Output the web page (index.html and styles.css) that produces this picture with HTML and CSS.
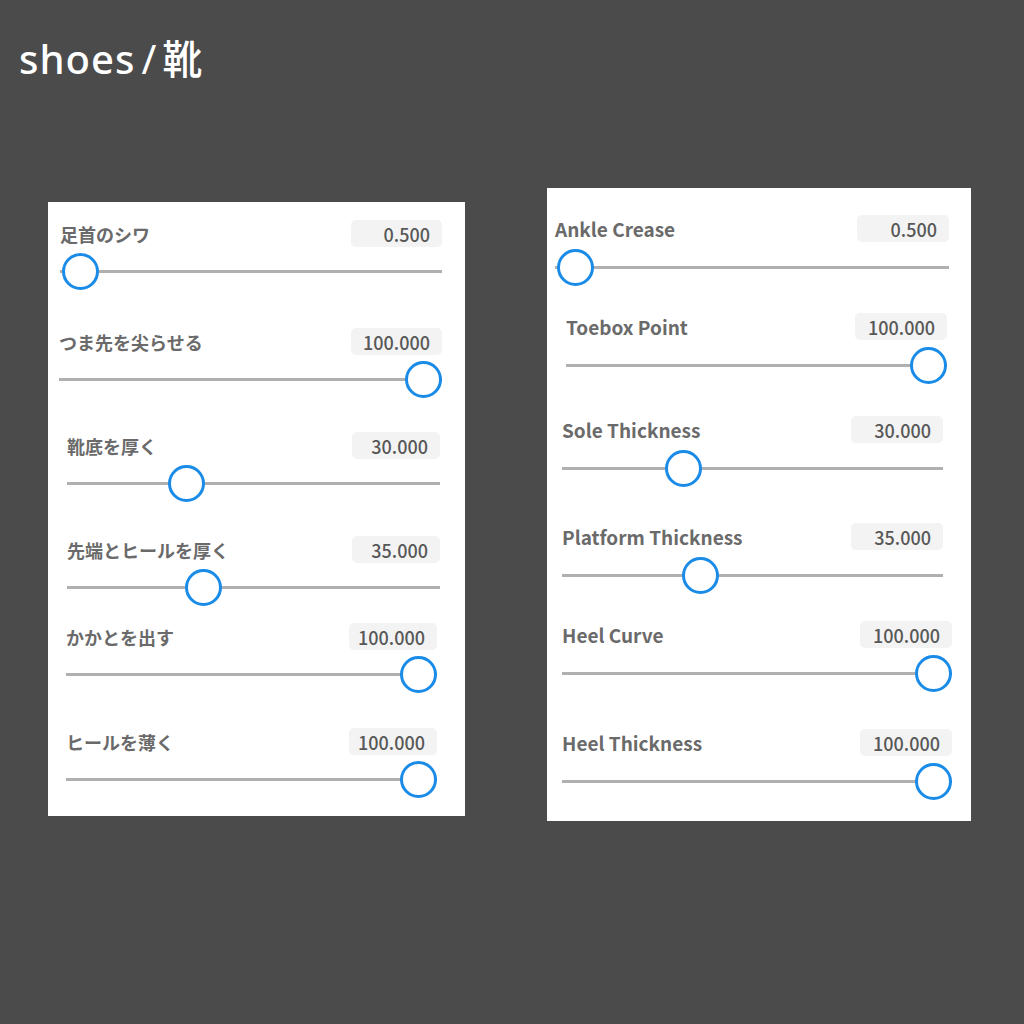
FILE: index.html
```html
<!DOCTYPE html>
<html lang="ja">
<head>
<meta charset="utf-8">
<title>shoes/靴</title>
<link rel="stylesheet" href="styles.css">
</head>
<body>
<h1 class="title">shoes<span class="slash">/</span>靴</h1>
<div class="panels">
  <div class="panel panel-left">
    <div class="row"><div class="head"><span class="label">足首のシワ</span><span class="value">0.500</span></div><div class="slider"><div class="track"></div><div class="thumb" style="--v:0.005"></div></div></div>
    <div class="row"><div class="head"><span class="label">つま先を尖らせる</span><span class="value">100.000</span></div><div class="slider"><div class="track"></div><div class="thumb" style="--v:1"></div></div></div>
    <div class="row"><div class="head"><span class="label">靴底を厚く</span><span class="value">30.000</span></div><div class="slider"><div class="track"></div><div class="thumb" style="--v:0.3"></div></div></div>
    <div class="row"><div class="head"><span class="label">先端とヒールを厚く</span><span class="value">35.000</span></div><div class="slider"><div class="track"></div><div class="thumb" style="--v:0.35"></div></div></div>
    <div class="row"><div class="head"><span class="label">かかとを出す</span><span class="value">100.000</span></div><div class="slider"><div class="track"></div><div class="thumb" style="--v:1"></div></div></div>
    <div class="row"><div class="head"><span class="label">ヒールを薄く</span><span class="value">100.000</span></div><div class="slider"><div class="track"></div><div class="thumb" style="--v:1"></div></div></div>
  </div>
  <div class="panel panel-right">
    <div class="row"><div class="head"><span class="label en">Ankle Crease</span><span class="value">0.500</span></div><div class="slider"><div class="track"></div><div class="thumb" style="--v:0.005"></div></div></div>
    <div class="row"><div class="head"><span class="label en">Toebox Point</span><span class="value">100.000</span></div><div class="slider"><div class="track"></div><div class="thumb" style="--v:1"></div></div></div>
    <div class="row"><div class="head"><span class="label en">Sole Thickness</span><span class="value">30.000</span></div><div class="slider"><div class="track"></div><div class="thumb" style="--v:0.3"></div></div></div>
    <div class="row"><div class="head"><span class="label en">Platform Thickness</span><span class="value">35.000</span></div><div class="slider"><div class="track"></div><div class="thumb" style="--v:0.35"></div></div></div>
    <div class="row"><div class="head"><span class="label en">Heel Curve</span><span class="value">100.000</span></div><div class="slider"><div class="track"></div><div class="thumb" style="--v:1"></div></div></div>
    <div class="row"><div class="head"><span class="label en">Heel Thickness</span><span class="value">100.000</span></div><div class="slider"><div class="track"></div><div class="thumb" style="--v:1"></div></div></div>
  </div>
</div>
</body>
</html>
```
FILE: styles.css
```css
html, body {
  margin: 0;
  padding: 0;
  background: #4b4b4b;
}
body {
  width: 1024px;
  height: 1024px;
  overflow: hidden;
  font-family: "Noto Sans CJK JP", "Noto Sans", sans-serif;
}
.title {
  margin: 0;
  padding: 39px 0 0 19px;
  font-family: "Noto Sans", "Noto Sans CJK JP", sans-serif;
  font-size: 40px;
  line-height: 40px;
  font-weight: 500;
  color: #ffffff;
  letter-spacing: 1px;
}
.title .slash {
  font-weight: 400;
  margin: 0 5px 0 6px;
}
.panels {
  display: flex;
  align-items: flex-start;
  gap: 82px;
  margin: 109px 0 0 48px;
}
.panel {
  background: #ffffff;
  display: flex;
  flex-direction: column;
}
.panel-left {
  width: 417px;
  height: 614px;
  margin-top: 14px;
}
.panel-right {
  width: 424px;
  height: 633px;
}
.row {
  display: flex;
  flex-direction: column;
}
.head {
  height: 27px;
  display: flex;
  align-items: center;
  justify-content: space-between;
}
.label {
  font-size: 18px;
  font-weight: 700;
  color: #6a6a6a;
  line-height: 1;
}
.label.en {
  font-size: 19px;
}
.value {
  box-sizing: border-box;
  width: 91px;
  height: 27px;
  padding-right: 12px;
  background: #f3f3f3;
  border-radius: 5px;
  text-align: right;
  font-size: 18px;
  font-weight: 500;
  line-height: 29px;
  color: #585858;
}
.slider {
  position: relative;
  height: 36px;
  margin-top: 6px;
}
.panel-right .slider {
  margin-top: 7px;
}
.track {
  position: absolute;
  left: 0;
  right: 0;
  top: 17px;
  height: 3px;
  background: #b0b0b0;
}
.thumb {
  position: absolute;
  top: 0;
  left: calc(var(--v) * (100% - 37px));
  box-sizing: border-box;
  width: 37px;
  height: 37px;
  border: 3px solid #1a8ce8;
  border-radius: 50%;
  background: #ffffff;
}

/* left panel rows (collage pieces with slight offsets) */
.panel-left .row:nth-child(1) { margin-top: 18px; padding: 0 23px 0 12px; }
.panel-left .row:nth-child(2) { margin-top: 39px; padding: 0 23px 0 11px; }
.panel-left .row:nth-child(3) { margin-top: 35px; padding: 0 25px 0 19px; }
.panel-left .row:nth-child(4) { margin-top: 35px; padding: 0 25px 0 19px; }
.panel-left .row:nth-child(5) { margin-top: 18px; padding: 0 28px 0 18px; }
.panel-left .row:nth-child(6) { margin-top: 36px; padding: 0 28px 0 18px; }
.panel-left .row:nth-child(n+3) .value { width: 88px; }

/* right panel rows */
.panel-right .row:nth-child(1) { margin-top: 27px; padding: 0 22px 0 8px; }
.panel-right .row:nth-child(2) { margin-top: 28px; padding: 0 24px 0 19px; }
.panel-right .row:nth-child(3) { margin-top: 33px; padding: 0 28px 0 15px; }
.panel-right .row:nth-child(4) { margin-top: 37px; padding: 0 28px 0 15px; }
.panel-right .row:nth-child(5) { margin-top: 28px; padding: 0 19px 0 15px; }
.panel-right .row:nth-child(6) { margin-top: 38px; padding: 0 19px 0 15px; }
.panel-right .value { width: 92px; }
```
